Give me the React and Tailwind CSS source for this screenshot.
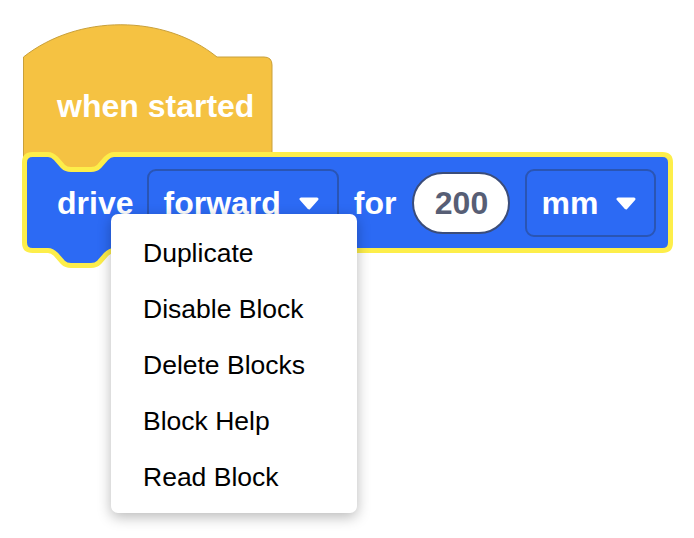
import React from 'react';

const font = { fontFamily: '"Liberation Sans", Arial, Helvetica, sans-serif' };

const Caret = () => (
    <svg width="22" height="13" viewBox="0 0 22 13" className="shrink-0">
        <path d="M3 2 L19 2 L11 11 Z" fill="white" stroke="white" strokeWidth="3" strokeLinejoin="round" />
    </svg>
);

const Dropdown = ({ label }) => (
    <div className="flex h-[68px] items-center gap-[17px] rounded-[9px] border-2 border-[#2a55b4] pl-[14px] pr-[17px]">
        <span className="text-[32px] font-bold text-white">{label}</span>
        <Caret />
    </div>
);

const menuItems = ['Duplicate', 'Disable Block', 'Delete Blocks', 'Block Help', 'Read Block'];

export default function App() {
    return (
        <div className="relative h-[538px] w-[694px] overflow-hidden bg-white" style={font}>
            {/* Bloque sombrero */}
            <div className="relative ml-[23px] mt-[25px] h-[127px] w-[250px]">
                <svg className="absolute left-0 top-0 overflow-visible" width="250" height="150" viewBox="23 25 250 150">
                    <path
                        d="M23.5 57 C78 14, 164 14, 217 57 L264 57 Q272 57 272 65 L272 175 L23.5 175 Z"
                        fill="#f5c242"
                        stroke="#c9a03a"
                        strokeWidth="1"
                    />
                </svg>
                <div className="relative pl-[34px] pt-[63px] text-[32px] font-bold leading-[36px] text-white">
                    when started
                </div>
            </div>

            {/* Bloque de movimiento */}
            <div className="relative ml-[23px] h-[116px] w-[651px]">
                <svg className="absolute left-0 top-0 overflow-visible" width="651" height="116" viewBox="23 152 651 116">
                    <path
                        d="M32.5 154.5 L48 154.5 c4 0 6 2 8 4 l7 8 c2 2 4 3 8 3 h20 c4 0 6 -1 8 -3 l7 -8 c2 -2 4 -4 8 -4 L662.5 154.5 Q670.5 154.5 670.5 162.5 L670.5 242.5 Q670.5 250.5 662.5 250.5 L114 250.5 c-4 0 -6 2 -8 4 l-7 8 c-2 2 -4 3 -8 3 h-20 c-4 0 -6 -1 -8 -3 l-7 -8 c-2 -2 -4 -4 -8 -4 L32.5 250.5 Q24.5 250.5 24.5 242.5 L24.5 162.5 Q24.5 154.5 32.5 154.5 Z"
                        fill="#2c6af4"
                        stroke="#fdee4a"
                        strokeWidth="5"
                        strokeLinejoin="round"
                    />
                </svg>
                <div className="relative flex items-center pl-[34px] pt-[17px]">
                    <span className="mr-[14px] text-[32px] font-bold text-white">drive</span>
                    <Dropdown label="forward" />
                    <span className="ml-[15px] mr-[16px] text-[32px] font-bold text-white">for</span>
                    <div className="flex h-[62px] w-[98px] items-center justify-center rounded-full border-2 border-[#3b4d7a] bg-white">
                        <span className="text-[32px] font-bold text-[#575e75]">200</span>
                    </div>
                    <div className="ml-[15px]">
                        <Dropdown label="mm" />
                    </div>
                </div>
            </div>

            {/* Menú contextual */}
            <div className="absolute left-[111px] top-[214px] h-[299px] w-[246px] rounded-[7px] bg-white pt-[11px] shadow-[0_4px_14px_rgba(0,0,0,0.28)]">
                {menuItems.map((item) => (
                    <div key={item} className="h-[56px] pl-[32px] text-[26.5px] leading-[56px] text-black">
                        {item}
                    </div>
                ))}
            </div>
        </div>
    );
}
